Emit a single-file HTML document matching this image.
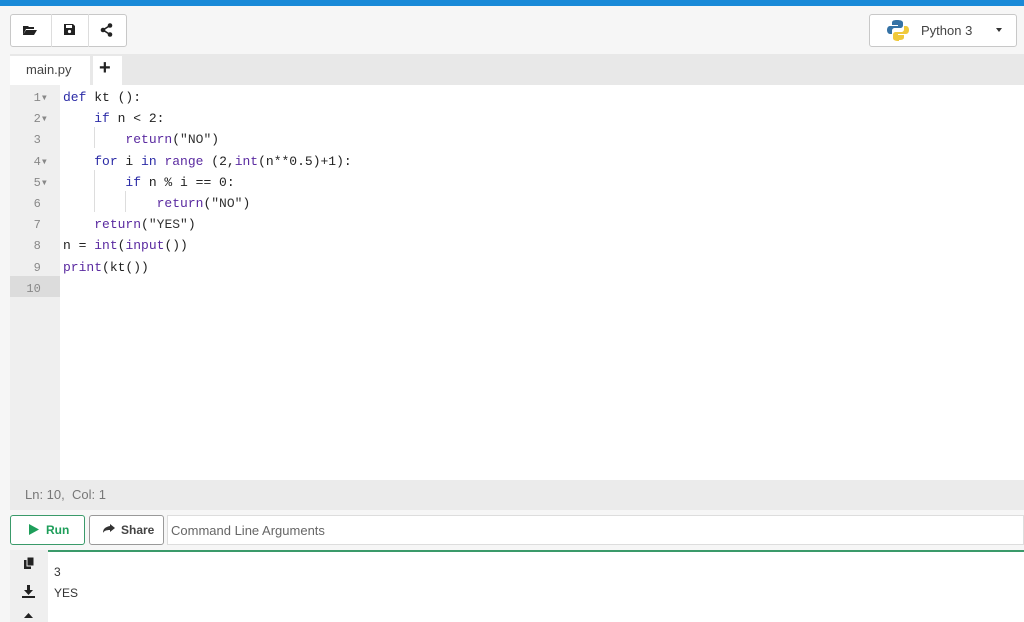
<!DOCTYPE html>
<html><head><style>
body{margin:0;width:1024px;height:622px;background:#f6f6f6;font-family:"Liberation Sans",sans-serif;position:relative;overflow:hidden}
.a{position:absolute}
.code{font-family:"Liberation Mono",monospace;font-size:13px;color:#222;white-space:pre}
.k{color:#2b2ba6}.f{color:#5a2aa0}.s{color:#333}.n{color:#1a1aa6}
.ln{font-family:"Liberation Mono",monospace;font-size:12px;color:#888;text-align:right;width:36px;left:12px}
.btn{border:1px solid #c8c8c8;background:#fff;border-radius:3px;box-sizing:border-box}
</style></head><body>
<div class="a" style="left:0;top:0;width:1024px;height:6px;background:#1a8ad8"></div>
<div class="a btn" style="left:10px;top:14px;width:117px;height:33px"></div>
<div class="a" style="left:51px;top:14px;width:1px;height:33px;background:#ddd"></div>
<div class="a" style="left:88px;top:14px;width:1px;height:33px;background:#ddd"></div>
<svg class="a" style="left:22px;top:24px" width="16" height="12"><path d="M1 2h5l1 1h5v2H4L1 11z M4 6h11l-3 5H1z" fill="#222"/></svg>
<svg class="a" style="left:63px;top:23px" width="13" height="13"><path d="M1 1h9l2 2v9H1z" fill="#222"/><rect x="3" y="2" width="6" height="3" fill="#fff"/><circle cx="6.5" cy="8.5" r="1.6" fill="#fff"/></svg>
<svg class="a" style="left:100px;top:23px" width="13" height="14"><circle cx="10" cy="2.5" r="2.3" fill="#222"/><circle cx="3" cy="7" r="2.3" fill="#222"/><circle cx="10" cy="11.5" r="2.3" fill="#222"/><path d="M10 2.5L3 7L10 11.5" stroke="#222" stroke-width="1.6" fill="none"/></svg>
<div class="a btn" style="left:869px;top:14px;width:148px;height:33px"></div>
<svg class="a" style="left:887px;top:19px" width="22" height="22"><path d="M10 1c-4 0-5 1-5 3v2h6v1H3c-2 0-3 2-3 4s1 4 3 4h2v-3c0-2 1-3 3-3h5c2 0 3-1 3-3V4c0-2-2-3-6-3z" fill="#3572a5"/><path d="M12 21c4 0 5-1 5-3v-2h-6v-1h8c2 0 3-2 3-4s-1-4-3-4h-2v3c0 2-1 3-3 3H9c-2 0-3 1-3 3v3c0 2 2 3 6 3z" fill="#f0c93a"/></svg>
<div class="a" style="left:921px;top:23px;font-size:13px;color:#444">Python 3</div>
<div class="a" style="left:996px;top:28px;border:3.5px solid transparent;border-top:4px solid #333"></div>
<div class="a" style="left:10px;top:54px;width:1014px;height:31px;background:#e8e8e8"></div>
<div class="a" style="left:10px;top:56px;width:80px;height:29px;background:#fff"></div>
<div class="a" style="left:26px;top:62px;font-size:13px;color:#444">main.py</div>
<div class="a" style="left:93px;top:56px;width:29px;height:29px;background:#fff"></div>
<div class="a" style="left:99px;top:57px;font-size:20px;font-weight:bold;color:#222">+</div>
<div class="a" style="left:10px;top:85px;width:50px;height:395px;background:#efefef"></div>
<div class="a" style="left:60px;top:85px;width:964px;height:395px;background:#fff"></div>
<div class="a" style="left:10px;top:276px;width:50px;height:21px;background:#dcdcdc"></div>
<div class="a" style="left:94px;top:127px;width:1px;height:21px;background:#ddd"></div>
<div class="a" style="left:94px;top:170px;width:1px;height:42px;background:#ddd"></div>
<div class="a" style="left:125px;top:191px;width:1px;height:21px;background:#ddd"></div>
<div class="a ln" style="top:88px;line-height:21.2px">1▾<br>2▾<br>3&nbsp;<br>4▾<br>5▾<br>6&nbsp;<br>7&nbsp;<br>8&nbsp;<br>9&nbsp;<br>10&nbsp;</div>
<div class="a code" style="left:63px;top:87px;line-height:21.2px"><span class="k">def</span> kt ():
    <span class="k">if</span> n &lt; 2:
        <span class="f">return</span>(<span class="s">"NO"</span>)
    <span class="k">for</span> i <span class="k">in</span> <span class="f">range</span> (2,<span class="f">int</span>(n**0.5)+1):
        <span class="k">if</span> n % i == 0:
            <span class="f">return</span>(<span class="s">"NO"</span>)
    <span class="f">return</span>(<span class="s">"YES"</span>)
n = <span class="f">int</span>(<span class="f">input</span>())
<span class="f">print</span>(kt())</div>
<div class="a" style="left:10px;top:480px;width:1014px;height:30px;background:#ebebeb"></div>
<div class="a" style="left:25px;top:487px;font-size:13px;color:#777">Ln: 10,&nbsp; Col: 1</div>
<div class="a btn" style="left:10px;top:515px;width:75px;height:30px;border-color:#3a9a6a"></div>
<svg class="a" style="left:28px;top:523px" width="12" height="13"><path d="M1 1L11 6.5L1 12z" fill="#1e9e5a"/></svg>
<div class="a" style="left:46px;top:523px;font-size:12px;font-weight:bold;color:#1e9e5a">Run</div>
<div class="a btn" style="left:89px;top:515px;width:75px;height:30px;border-color:#999"></div>
<svg class="a" style="left:102px;top:523px" width="13" height="11"><path d="M8 1l5 4-5 4V7C4 7 2 8 1 10 1 6 3 4 8 3z" fill="#333"/></svg>
<div class="a" style="left:121px;top:523px;font-size:12px;font-weight:bold;color:#444">Share</div>
<div class="a" style="left:167px;top:515px;width:857px;height:30px;background:#fff;border:1px solid #ddd;box-sizing:border-box"></div>
<div class="a" style="left:171px;top:523px;font-size:13px;color:#666">Command Line Arguments</div>
<div class="a" style="left:10px;top:550px;width:38px;height:72px;background:#efefef"></div>
<div class="a" style="left:48px;top:550px;width:976px;height:72px;background:#fff;border-top:2px solid #3a9a6a;box-sizing:border-box"></div>
<svg class="a" style="left:23px;top:557px" width="12" height="13"><rect x="1" y="3" width="7" height="9" fill="#222"/><rect x="4" y="0" width="7" height="9" fill="#222" stroke="#efefef"/></svg>
<svg class="a" style="left:22px;top:585px" width="13" height="13"><path d="M5 0h3v5h3L6.5 10 2 5h3z M0 11h13v2H0z" fill="#222"/></svg>
<svg class="a" style="left:22px;top:613px" width="13" height="9"><path d="M6.5 0L11 5H2z" fill="#222"/></svg>
<div class="a" style="left:54px;top:562px;font-size:12px;color:#333;line-height:21px">3<br>YES</div>
</body></html>
